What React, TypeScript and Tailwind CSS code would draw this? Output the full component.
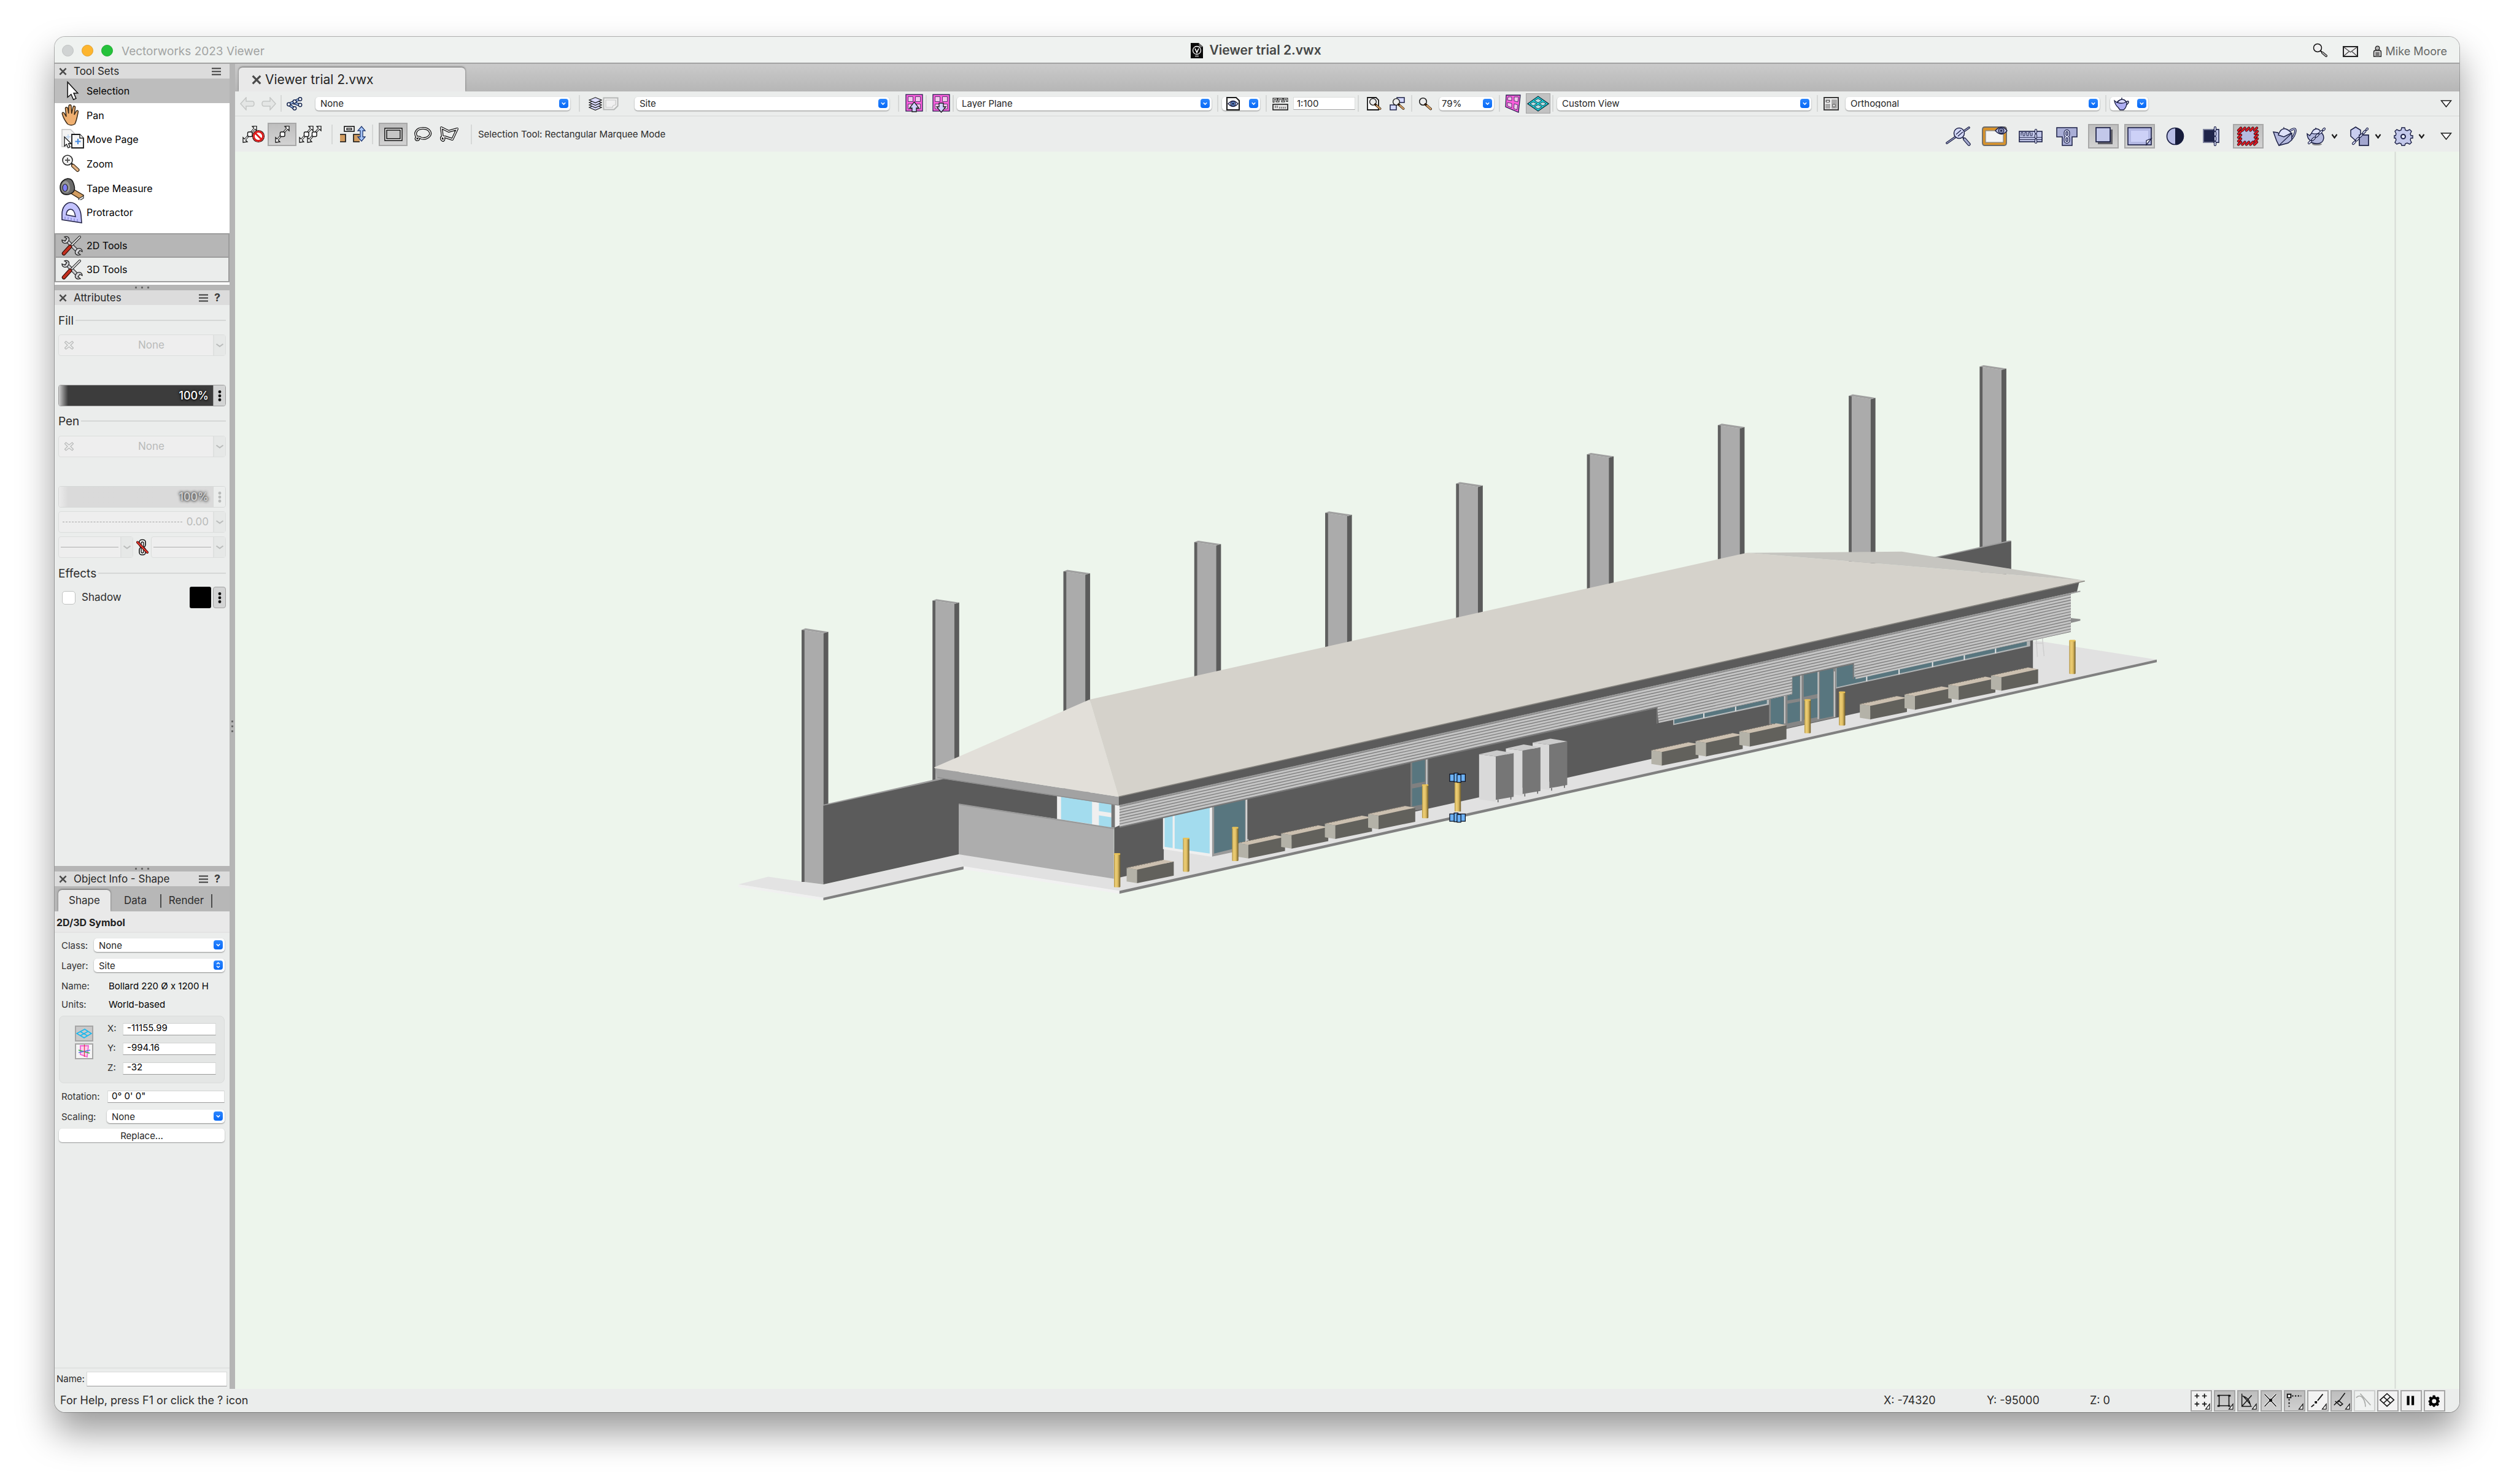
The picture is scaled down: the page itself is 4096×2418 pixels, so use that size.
import React from "react";
import type { ReactNode } from "react";

const NAVY = "#1b1f45";
const LAV = "#c3c8ea";

/* ---------- small building blocks ---------- */

function Ic({ w, h, className = "", children }: { w: number; h: number; className?: string; children: ReactNode }) {
  return (
    <svg width={w} height={h} viewBox={`0 0 ${w} ${h}`} fill="none" aria-hidden="true" className={`shrink-0 ${className}`}>
      {children}
    </svg>
  );
}

function Sep({ className = "" }: { className?: string }) {
  return <span className={`w-[2px] shrink-0 bg-[#d6d8d7] ${className}`} />;
}

function BlueArrow({ double = false }: { double?: boolean }) {
  return (
    <svg width="15" height="15" viewBox="0 0 15 15" fill="none" aria-hidden="true" className="shrink-0 rounded-[4px] bg-linear-to-b from-[#2a86ff] to-[#0568f6]">
      {double ? (
        <path d="M5 6 7.500 3.500 10 6M5 9 7.500 11.500 10 9" stroke="#fff" strokeWidth="1.500" />
      ) : (
        <path d="M4.800 6.300 7.500 9 10.200 6.300" stroke="#fff" strokeWidth="1.600" />
      )}
    </svg>
  );
}

function Pick({ label, value, className = "", double = false, pad = "pl-2" }: { label: string; value: string; className?: string; double?: boolean; pad?: string }) {
  return (
    <div className={`relative flex h-[22px] shrink-0 items-center ${className}`}>
      <select aria-label={label} defaultValue={value} className={`h-full w-full appearance-none rounded-[5px] bg-white text-[15px] leading-none text-[#262626] shadow-[0_1px_2px_rgba(0,0,0,0.4)] ${pad}`}>
        <option>{value}</option>
      </select>
      <span className="pointer-events-none absolute right-[3px] top-[3px]">
        <BlueArrow double={double} />
      </span>
    </div>
  );
}

function Chevron({ className = "" }: { className?: string }) {
  return (
    <Ic w={14} h={8} className={className}>
      <path d="M1.500 1.500 7 5.500l5.500-4" stroke="currentColor" strokeWidth="2" />
    </Ic>
  );
}

function SmallChevron() {
  return (
    <Ic w={11} h={8}>
      <path d="M1.500 1 5.500 6.500 9.500 1" stroke="#1c1c1c" strokeWidth="2.200" />
    </Ic>
  );
}

function CloseX({ size = 13 }: { size?: number }) {
  return (
    <svg width={size} height={size} viewBox="0 0 14 14" aria-hidden="true">
      <path d="M1.500 1.500 12.500 12.500M12.500 1.500 1.500 12.500" stroke="#4a4a4a" strokeWidth="2.800" />
    </svg>
  );
}

function MenuBars() {
  return (
    <svg width="15" height="13" viewBox="0 0 15 13" aria-hidden="true">
      <path d="M0 1.500h15M0 6.500h15M0 11.500h15" stroke="#3c3c3c" strokeWidth="2" />
    </svg>
  );
}

function Grip() {
  return (
    <div className="flex items-center justify-center gap-[7px] bg-[#b5b5b5]">
      <i className="size-[3px] bg-[#6a6a6a]" />
      <i className="size-[3px] bg-[#6a6a6a]" />
      <i className="size-[3px] bg-[#6a6a6a]" />
    </div>
  );
}

function PaletteHeader({ title, help = true }: { title: string; help?: boolean }) {
  return (
    <header className="flex h-6 shrink-0 items-center bg-[#dcdcdc] pl-[7px] pr-[14px] text-[17px] leading-6 text-[#262626]">
      <button aria-label={`Close ${title}`}><CloseX /></button>
      <h2 className="ml-[11px] grow">{title}</h2>
      <button aria-label={`${title} menu`}><MenuBars /></button>
      {help && <button aria-label={`${title} help`} className="ml-[9px] w-[12px] text-[18px] font-bold leading-6 text-[#3c3c3c]">?</button>}
    </header>
  );
}

/* ---------- title bar ---------- */

function TitleBar() {
  return (
    <header className="grid h-11 shrink-0 grid-cols-[1fr_auto_1fr] items-center border-b-2 border-[#a3a3a3] bg-[#eff2f0] pl-3 pr-5 pt-[2px]">
      <div className="flex items-center gap-[13px]">
        <button aria-label="Close window" className="size-[19px] rounded-full border border-[#bfc2c2] bg-[#d0d3d3]" />
        <button aria-label="Minimize window" className="size-[19px] rounded-full border border-[#e09f2b] bg-[#fdb52e]" />
        <button aria-label="Zoom window" className="size-[19px] rounded-full border border-[#1eaa30] bg-[#25c23b]" />
        <span className="ml-px pt-1 text-[19px] leading-6 text-[#a2a4a3]">Vectorworks 2023 Viewer</span>
      </div>
      <div className="flex items-center gap-[10px] pl-[5px]">
        <svg width="20" height="25" viewBox="0 0 20 25" aria-hidden="true">
          <path d="M0 0h13l7 6v19H0z" fill="#0a0a0a" />
          <path d="M13 0l7 6.500-6 1z" fill="#6a6a6a" />
          <circle cx="10" cy="12" r="6.500" stroke="#fff" strokeWidth="1.300" fill="none" />
          <path d="M7 9l3 6.500L13 9" stroke="#fff" strokeWidth="1.700" fill="none" />
          <path d="M7 21.500h6" stroke="#9a9a9a" strokeWidth="2" />
        </svg>
        <h1 className="text-[21px] font-semibold leading-6 text-[#454746]">Viewer trial 2.vwx</h1>
      </div>
      <div className="flex items-center justify-end">
        <button aria-label="Search">
          <Ic w={25} h={24}>
            <circle cx="8" cy="8" r="6.500" fill="#f0f0f0" stroke="#111" strokeWidth="1.500" />
            <path d="M12.500 12.500 16 16" stroke="#111" strokeWidth="2" />
            <path d="M16 16l6 5" stroke="#111" strokeWidth="4" strokeLinecap="round" />
            <path d="M16 16l6 5" stroke="#b5b5b5" strokeWidth="2" strokeLinecap="round" />
          </Ic>
        </button>
        <button aria-label="Messages" className="ml-6 mt-1">
          <Ic w={25} h={18}>
            <rect x="1" y="1" width="23" height="16" fill="#ededed" stroke="#222" strokeWidth="2" />
            <path d="M2 2l10.500 8L23 2M2 16l8-7M23 16l-8-7" stroke="#444" strokeWidth="1.300" />
          </Ic>
        </button>
        <button className="ml-6 flex items-center gap-[6px] pt-[3px] text-[18px] leading-6 text-[#656766]">
          <Ic w={15} h={19}>
            <circle cx="7.500" cy="4.500" r="3.300" fill="#b5b5b5" stroke="#222" strokeWidth="1.300" />
            <path d="M1.500 18V11q0-3 3-3h6q3 0 3 3v7z" fill="#c9c9c9" stroke="#222" strokeWidth="1.300" />
            <path d="M4.500 11h6v7h-6z" fill="#777" />
          </Ic>
          Mike Moore
        </button>
      </div>
    </header>
  );
}

/* ---------- tool palette ---------- */

const ToolArt: Record<string, ReactNode> = {
  Selection: (
    <path d="M17 4v26l6-5 4 9 4.500-2-4-9h7z" fill="#fff" stroke="#111" strokeWidth="1.600" transform="translate(-3 0) scale(.95)" />
  ),
  Pan: (
    <path d="M13 33C9 28 6 22 4.500 17c-1-3 2-4 3.500-1l3 5L9.500 8c0-3 3.500-3 4 0l1.200 8 .3-12c.3-3 4-3 4 0l.6 12L22 5.500c.6-2.500 4-2 3.500 1L24 18l3-5.500c1.300-2.500 4-1.500 3.300 1C29 20 28 27 25 33q-6 4-12 0z" fill="#f0b071" stroke="#3a2a18" strokeWidth="1.500" />
  ),
  "Move Page": (
    <>
      <path d="M4 3h14l6 6v22H4z" fill="#f3f3f3" stroke="#c4c4c4" strokeWidth="1.500" />
      <path d="M14 11v8M10 15h8" stroke="#b8d2ef" strokeWidth="1.500" />
      <path d="M20 11h13l6 6v16H20z" fill="#f5f5f5" stroke="#1a1a1a" strokeWidth="1.800" />
      <path d="M33 11v6h6" stroke="#1a1a1a" strokeWidth="1.300" fill="#fff" />
      <path d="M30 18v9M25.500 22.500h9" stroke="#3f86e0" strokeWidth="2" />
      <path d="M8 15v15l3.500-3 2.500 6 3-1.300-2.400-5.700H19z" fill="#fff" stroke="#111" strokeWidth="1.300" />
    </>
  ),
  Zoom: (
    <>
      <circle cx="13" cy="13" r="8" fill="#f3f3f3" stroke="#2a2a2a" strokeWidth="1.600" />
      <path d="M13 9v8M9 13h8" stroke="#555" strokeWidth="1.800" />
      <path d="M19 18l3 3" stroke="#222" strokeWidth="3" />
      <path d="M22 22l7.500 7" stroke="#2a1c0c" strokeWidth="6" strokeLinecap="round" />
      <path d="M22 22l7.500 7" stroke="#e2b283" strokeWidth="3.800" strokeLinecap="round" />
    </>
  ),
  "Tape Measure": (
    <>
      <path d="M15 25l7-5 17 10-2 5-4 1z" fill="#d19c60" stroke="#2a1c0c" strokeWidth="1.400" />
      <path d="M31 36l8-5v4l-7 4z" fill="#eee" stroke="#333" strokeWidth="1.200" />
      <path d="M1 17C1 9 7 4 13 3c7 0 9 4 11 12s-2 12-10 14C5 30 1 25 1 17z" fill="#6b6b6b" stroke="#161616" strokeWidth="1.500" />
      <path d="M3 18c0-7 3-11 7-11s7 6 7 11-3 8-7 8-7-3-7-8z" fill="#999" />
      <ellipse cx="9" cy="18" rx="4" ry="6" fill="#7f7ff5" stroke="#222" strokeWidth="1.200" />
    </>
  ),
  Protractor: (
    <>
      <path fillRule="evenodd" d="M4 31V22C4 10 11 3 18 3c9 0 16 10 17 20l1 13zM11 23l15 3c-1-7-4-12-8-12-5 0-7 5-7 9z" fill="#c3c3ff" stroke="#26264a" strokeWidth="1.600" />
      <path d="M9 30v-4M14 31v-4M19 32v-4M24 33v-4M29 34v-4" stroke="#7d7dd0" strokeWidth="1.200" />
    </>
  ),
};

function CrossedTools() {
  return (
    <Ic w={40} h={38}>
      <path d="M10 9l19 19" stroke="#2a2a2a" strokeWidth="6" />
      <path d="M10 9l19 19" stroke="#cfd0d4" strokeWidth="3.600" />
      <path d="M4 10c0 5 5 7 9 4l2-3C17 6 12 3 8 5l4 3-3 4z" fill="#d6d6da" stroke="#222" strokeWidth="1.300" />
      <path d="M37 29c0-5-5-7-9-4l-2 3c-2 5 3 8 8 6l-4-3 3-4z" fill="#d6d6da" stroke="#222" strokeWidth="1.300" />
      <path d="M33 5 20 18" stroke="#222" strokeWidth="4" strokeLinecap="round" />
      <path d="M33 5 20 18" stroke="#efefef" strokeWidth="1.800" strokeLinecap="round" />
      <path d="M17 21 7 32" stroke="#2b0a06" strokeWidth="6.500" strokeLinecap="round" />
      <path d="M17 21 7 32" stroke="#c3301f" strokeWidth="4.300" strokeLinecap="round" />
    </Ic>
  );
}

function ToolSets() {
  return (
    <section aria-label="Tool Sets" className="flex shrink-0 flex-col bg-white text-[16px] text-black">
      <PaletteHeader title="Tool Sets" help={false} />
      <button className="flex h-10 items-center gap-1 bg-[#bdbdbd] pl-2">
        <Ic w={40} h={36}>{ToolArt.Selection}</Ic>Selection
      </button>
      <div className="mb-[14px] grid h-[198px] grid-rows-5">
        {["Pan", "Move Page", "Zoom", "Tape Measure", "Protractor"].map((t) => (
          <button key={t} className="flex items-center gap-1 pl-2">
            <Ic w={40} h={38}>{ToolArt[t]}</Ic>{t}
          </button>
        ))}
      </div>
      <button className="flex h-10 items-center gap-1 border-2 border-[#9c9c9c] bg-[#b6b6b6] pl-[6px]">
        <CrossedTools />2D Tools
      </button>
      <button className="mb-1 flex h-10 items-center gap-1 border-2 border-t-0 border-[#9c9c9c] bg-[#ebedec] pl-[6px]">
        <CrossedTools />3D Tools
      </button>
    </section>
  );
}

/* ---------- attributes palette ---------- */

function GroupTitle({ children, className = "" }: { children: ReactNode; className?: string }) {
  return (
    <h3 className={`flex h-6 items-center gap-[3px] text-[19px] leading-6 text-[#2b2b2b] ${className}`}>
      <span className="pt-[2px]">{children}</span>
      <span className="h-[2px] grow bg-[#d5d7d6]" />
    </h3>
  );
}

function FadedDrop({ label, children, className = "" }: { label: string; children: ReactNode; className?: string }) {
  return (
    <button disabled aria-label={label} className={`flex h-[35px] items-stretch rounded-[4px] border border-[#dcdedd] bg-[#eeeeee] text-[17px] text-[#b9bbba] ${className}`}>
      <span className="relative flex grow items-center">{children}</span>
      <span className="flex w-5 items-center justify-center border-l-2 border-[#dfe1e0] bg-[#e6e8e7]"><Chevron /></span>
    </button>
  );
}

function NoneFill() {
  return (
    <>
      <Ic w={15} h={15} className="ml-[9px]">
        <path d="M2.500 1 7.500 5l5-4 2 2-4.500 4.500 4.500 4.500-2 2-5-4-5 4-2-2L5 7.500.500 3z" stroke="#b9bbba" strokeWidth="1.300" />
      </Ic>
      <span className="ml-[105px]">None</span>
    </>
  );
}

function Dots({ faded = false }: { faded?: boolean }) {
  return (
    <Ic w={6} h={20}>
      <g fill={faded ? "#b9bbba" : "#111"}>
        <circle cx="3" cy="3.500" r="2.400" /><circle cx="3" cy="10" r="2.400" /><circle cx="3" cy="16.500" r="2.400" />
      </g>
    </Ic>
  );
}

function Opacity({ faded = false, className = "" }: { faded?: boolean; className?: string }) {
  return (
    <div className={`flex h-[35px] overflow-hidden rounded-[4px] border ${faded ? "border-[#d6d8d7]" : "border-[#9b9b9b]"} ${className}`}>
      <div className={`flex grow items-center justify-end pr-[7px] text-[18px] font-medium ${faded ? "bg-linear-to-r from-[#ebebeb] from-0% to-[#dadada] to-6% text-[#d2d2d2] [text-shadow:0_0_4px_#333,0_0_5px_#444]" : "bg-linear-to-r from-[#d0d0d0] from-0% to-[#3c3c3c] to-6% text-white [text-shadow:0_0_5px_#000,0_1px_3px_#000]"}`}>
        100%
      </div>
      <button aria-label="Opacity options" className={`flex w-5 items-center justify-center border-l ${faded ? "border-[#d6d8d7] bg-[#ebedec]" : "border-[#9b9b9b] bg-[#d3d4d4]"}`}>
        <Dots faded={faded} />
      </button>
    </div>
  );
}

function Attributes() {
  return (
    <section aria-label="Attributes" className="flex min-h-0 grow flex-col">
      <PaletteHeader title="Attributes" />
      <div className="flex flex-col px-[6px] pt-[13px]">
        <GroupTitle>Fill</GroupTitle>
        <FadedDrop label="Fill style" className="mt-[11px]"><NoneFill /></FadedDrop>
        <Opacity className="mt-[47px]" />
        <GroupTitle className="mt-3">Pen</GroupTitle>
        <FadedDrop label="Pen style" className="mt-3"><NoneFill /></FadedDrop>
        <Opacity faded className="mt-[47px]" />
        <FadedDrop label="Line thickness" className="mt-[6px]">
          <span className="ml-[6px] mr-[7px] grow border-t border-dashed border-[#a5a5a5]" />
          <span className="mr-[7px]">0.00</span>
        </FadedDrop>
        <div className="mt-[6px] flex items-center justify-between">
          <FadedDrop label="Start marker" className="w-[122px]"><span className="mx-[3px] h-px grow bg-[#adadad]" /></FadedDrop>
          <button aria-label="Link markers">
            <Ic w={20} h={28}>
              <rect x="5" y="1.500" width="10" height="12" rx="4" fill="#fff" stroke="#111" strokeWidth="1.600" />
              <rect x="5" y="14" width="10" height="12" rx="4" fill="#fff" stroke="#111" strokeWidth="1.600" />
              <rect x="8" y="5" width="4" height="18" rx="2" fill="#ddd" stroke="#111" strokeWidth="1.300" />
              <path d="M2 5.500 18 22" stroke="#3a0a08" strokeWidth="4" strokeLinecap="round" />
              <path d="M2 5.500 18 22" stroke="#e8352c" strokeWidth="2.500" strokeLinecap="round" />
            </Ic>
          </button>
          <FadedDrop label="End marker" className="w-[122px]"><span className="mx-[3px] h-px grow bg-[#adadad]" /></FadedDrop>
        </div>
        <GroupTitle className="mt-[13px]">Effects</GroupTitle>
        <div className="mt-[10px] flex h-[35px] items-center">
          <label className="flex grow items-center gap-[10px] pl-[6px] text-[17px] text-[#2b2b2b]">
            <input type="checkbox" className="size-[22px] appearance-none rounded-[5px] border border-[#c0c2c1] bg-white" />
            Shadow
          </label>
          <button aria-label="Shadow colour" className="size-[35px] rounded-[3px] bg-black" />
          <button aria-label="Shadow options" className="ml-[3px] flex h-[35px] w-[21px] items-center justify-center rounded-[4px] border border-[#a3a3a3] bg-[#d3d4d4]"><Dots /></button>
        </div>
      </div>
    </section>
  );
}

/* ---------- object info palette ---------- */

const fieldBox = "h-5 border border-t-[#d0d2d1] border-x-[#dcdedd] border-b-[#9b9b9b] bg-white pl-[6px] text-[15px] leading-none text-black";

function PlaneIcon() {
  return (
    <Ic w={26} h={22}>
      <path d="M1 11 14 4l11 7-12 7zM7 8l12 7M19.500 7.500 7 14.500" stroke="#19b8ee" strokeWidth="1.600" />
    </Ic>
  );
}

function AxisIcon() {
  return (
    <Ic w={26} h={22}>
      <path d="M7 2h13l-2 18-11-4z" fill="#fbd0ee" stroke="#f062d2" strokeWidth="1.800" />
      <path d="M4 9l18 5" stroke="#29b94a" strokeWidth="1.300" />
      <path d="M4 13l19-4" stroke="#5a78ea" strokeWidth="1.300" />
      <path d="M13.500 0v20" stroke="#e23a4c" strokeWidth="1.300" />
    </Ic>
  );
}

function ObjectInfo() {
  const label = "text-[15px] leading-none text-[#333]";
  return (
    <section aria-label="Object Info" className="flex h-[843px] shrink-0 flex-col">
      <PaletteHeader title="Object Info - Shape" />
      <div role="tablist" className="flex h-[41px] shrink-0 items-end bg-[#b7b7b7] pl-[6px] text-[17px] text-[#2b2b2b]">
        <button role="tab" aria-selected="true" className="h-[35px] w-[85px] rounded-t-[6px] bg-[#e9e9e9] shadow-[0_-1px_3px_rgba(0,0,0,0.45)]">Shape</button>
        <button role="tab" aria-selected="false" className="h-[35px] w-[81px]">Data</button>
        <i className="mb-[6px] h-[22px] w-[2px] bg-[#4c4c4c]" />
        <button role="tab" aria-selected="false" className="h-[35px] w-[81px]">Render</button>
        <i className="mb-[6px] h-[22px] w-[2px] bg-[#4c4c4c]" />
      </div>
      <h3 className="z-10 h-[35px] shrink-0 border-b-2 border-[#e3e3e3] bg-[#e9e9e9] pl-[3px] text-[16px] font-bold leading-[36px] text-[#222]">2D/3D Symbol</h3>
      <div className="flex grow flex-col px-[7px] pr-[8px] pt-[9px]">
        <div className="flex h-[22px] items-center justify-between pl-1">
          <span className={label}>Class:</span>
          <Pick label="Class" value="None" className="w-[213px]" />
        </div>
        <div className="mt-[11px] flex h-[22px] items-center justify-between pl-1">
          <span className={label}>Layer:</span>
          <Pick label="Layer" value="Site" double className="w-[213px]" />
        </div>
        <div className="mt-[11px] flex h-[22px] items-center pl-1">
          <span className={`w-[77px] ${label}`}>Name:</span>
          <span className="text-[15px] leading-none text-black">Bollard 220 Ø x 1200 H</span>
        </div>
        <div className="mt-2 flex h-[22px] items-center pl-1">
          <span className={`w-[77px] ${label}`}>Units:</span>
          <span className="text-[15px] leading-none text-black">World-based</span>
        </div>
        <div className="mt-2 flex h-[110px] rounded-[8px] border border-[#dadcdb] bg-[#e4e6e5] pl-[25px] pt-[11px]">
          <div className="flex flex-col gap-[3px] pt-1">
            <button aria-label="Layer plane mode" className="flex h-[26px] w-[30px] items-center justify-center border-2 border-[#a6a6a6] bg-[#c9c9c9]"><PlaneIcon /></button>
            <button aria-label="Screen plane mode" className="flex h-[26px] w-[30px] items-center justify-center border-2 border-[#a6a6a6] bg-[#f5f5f5]"><AxisIcon /></button>
          </div>
          <div className="ml-[23px] flex flex-col gap-3">
            {[["X:", "-11155.99"], ["Y:", "-994.16"], ["Z:", "-32"]].map(([k, v]) => (
              <label key={k} className={`flex h-5 items-center ${label}`}>
                <span className="w-[25px] pb-1">{k}</span>
                <input defaultValue={v} className={`w-[152px] pb-[5px] ${fieldBox}`} />
              </label>
            ))}
          </div>
        </div>
        <label className={`mt-[11px] flex h-[21px] items-center pl-1 ${label}`}>
          <span className="w-[75px] shrink-0">Rotation:</span>
          <input defaultValue={"0° 0' 0\""} className={`w-0 min-w-0 grow pb-[3px] ${fieldBox}`} />
        </label>
        <div className="mt-[11px] flex h-[22px] items-center justify-between pl-1">
          <span className={label}>Scaling:</span>
          <Pick label="Scaling" value="None" className="w-[192px]" />
        </div>
        <button className="mt-[9px] h-[22px] rounded-[5px] bg-white text-[15px] leading-none text-[#262626] shadow-[0_1px_2px_rgba(0,0,0,0.35)]">Replace...</button>
      </div>
      <label className="flex h-[35px] shrink-0 items-center border-t-2 border-[#e1e3e2] pl-[3px] pr-1 text-[15px] text-[#2b2b2b]">
        <span className="w-[49px] shrink-0 pt-[2px]">Name:</span>
        <input defaultValue="" className="h-6 w-0 min-w-0 grow border border-[#d8dad9] border-b-[#9b9b9b] bg-white" />
      </label>
    </section>
  );
}

/* ---------- view bar ---------- */

function PinkPlane({ dir }: { dir: "up" | "down" }) {
  return (
    <Ic w={29} h={31}>
      <rect x="1" y="1" width="27" height="27" fill="#fb5fdc" stroke="#2a2050" strokeWidth="1.300" />
      <path d="M4.500 4.500h8v8h-8zM16.500 4.500h8v8h-8zM4.500 16.500h8v8h-8zM16.500 16.500h8v8h-8z" fill="#f3c6ec" stroke="#2a2050" strokeWidth=".8" />
      {dir === "up" ? (
        <path d="M14.500 13 22 23h-4v6h-7v-6H7z" fill="#cfd0ff" stroke="#1a1a1a" strokeWidth="1.300" />
      ) : (
        <path d="M14.500 30 22 21h-4v-6h-7v6H7z" fill="#cfd0ff" stroke="#1a1a1a" strokeWidth="1.300" />
      )}
    </Ic>
  );
}

function Magnifier() {
  return (
    <>
      <circle cx="7.500" cy="7.500" r="5.800" fill="#ececec" stroke="#1a1a1a" strokeWidth="1.500" />
      <path d="M11.500 12 20 19.500" stroke="#2a1808" strokeWidth="4" strokeLinecap="round" />
      <path d="M14 14 20 19.500" stroke="#dba56c" strokeWidth="2.400" strokeLinecap="round" />
    </>
  );
}

function ViewBar() {
  return (
    <div className="flex h-[41px] shrink-0 items-center border-b-2 border-[#e0e2e1] pl-2 pr-3">
      <button aria-label="Previous view">
        <Ic w={24} h={22}><path d="M1 11 10 1v6h10q3 0 3 4t-3 4H10v6z" fill="#e4e6e5" stroke="#c4c6c5" strokeWidth="1.500" /></Ic>
      </button>
      <button aria-label="Next view" className="ml-[11px]">
        <Ic w={24} h={22}><path d="M23 11 14 1v6H4q-3 0-3 4t3 4h10v6z" fill="#e4e6e5" stroke="#c4c6c5" strokeWidth="1.500" /></Ic>
      </button>
      <Sep className="ml-[7px] h-[27px]" />
      <button aria-label="Classes" className="ml-2">
        <Ic w={26} h={22}>
          <path d="M3 12 22 3M3 12 13 19M9 9l13 4" stroke="#16264f" strokeWidth="4.500" />
          <path d="M3 12 22 3M3 12 13 19M9 9l13 4" stroke="#a9c8f5" strokeWidth="2" />
          <g fill="#fff" stroke="#16264f" strokeWidth="1.500">
            <circle cx="3.500" cy="12" r="2.700" /><circle cx="13" cy="7.500" r="2.700" /><circle cx="22" cy="3.500" r="2.700" /><circle cx="22" cy="13" r="2.700" /><circle cx="13" cy="18.500" r="2.700" />
          </g>
        </Ic>
      </button>
      <Pick label="Active class" value="None" className="ml-[21px] w-[415px]" />
      <Sep className="ml-[14px] h-[27px]" />
      <button aria-label="Layers" className="ml-[14px]">
        <Ic w={22} h={22}>
          <g fill="#dcdcff" stroke="#1a1a1a" strokeWidth="1.200">
            <path d="M1 17l10-4 10 4-10 4.500z" /><path d="M1 13l10-4 10 4-10 4.500z" /><path d="M1 9l10-4 10 4-10 4.500z" /><path d="M1 5 11 .800 21 5 11 9.500z" />
          </g>
        </Ic>
      </button>
      <Ic w={26} h={22} className="ml-px">
        <path d="M1.500 1.500h23v13l-6 6h-17z" fill="#f0f0f0" stroke="#b5b7b6" strokeWidth="2" />
        <path d="M5 5h16v8q-5 0-5 4H5z" stroke="#c6c8c7" strokeWidth="1.200" />
      </Ic>
      <Pick label="Active layer" value="Site" className="ml-[26px] w-[415px]" />
      <Sep className="ml-[14px] h-[27px]" />
      <button aria-label="Plane up" className="ml-[10px]"><PinkPlane dir="up" /></button>
      <Sep className="ml-1 h-[27px]" />
      <button aria-label="Plane down" className="ml-[9px]"><PinkPlane dir="down" /></button>
      <Sep className="ml-1 h-[27px]" />
      <Pick label="Active plane" value="Layer Plane" className="ml-[5px] w-[415px]" />
      <Sep className="ml-[9px] h-[27px]" />
      <button aria-label="Saved views" className="ml-[6px] flex h-[22px] w-[62px] items-center justify-between rounded-[5px] bg-white pl-[7px] pr-[3px] shadow-[0_1px_2px_rgba(0,0,0,0.4)]">
        <Ic w={22} h={22}>
          <path d="M1 1h15l5 5v15H1z" fill="#fff" stroke="#1a1a1a" strokeWidth="2" />
          <path d="M3 11q8-9 16 0-8 9-16 0z" fill="#e8eefc" stroke={NAVY} strokeWidth="1.300" />
          <circle cx="11" cy="11" r="4" fill="#5b7fc0" stroke={NAVY} strokeWidth="1.200" />
          <circle cx="11" cy="11" r="1.500" fill="#101530" />
        </Ic>
        <BlueArrow />
      </button>
      <Sep className="ml-[9px] h-[27px]" />
      <label className="ml-[9px] flex items-center">
        <Ic w={26} h={22}>
          <path d="M2 9V3h5v4h3V3h6v4h3V3h5v5" stroke="#1a1a1a" strokeWidth="3" />
          <path d="M2 8V3h5v4h3V3h6v4h3V3h5v4" stroke="#fff" strokeWidth="1" />
          <rect x="1" y="12" width="24" height="9" fill="#e3e3e3" stroke="#1a1a1a" strokeWidth="1.600" />
          <path d="M5 14v4M8 14v4M12 19v-3M15 19v-3M18 19v-3M21 19v-3" stroke="#555" strokeWidth="1.200" />
        </Ic>
        <input aria-label="Layer scale" defaultValue="1:100" className="ml-2 h-[21px] w-[101px] border border-[#dcdedd] border-b-[#a5a5a5] bg-white pl-[5px] text-[15px] leading-none text-[#262626]" />
      </label>
      <Sep className="ml-1 h-[27px]" />
      <button aria-label="Fit to page" className="ml-[13px]">
        <Ic w={24} h={22}>
          <path d="M1 1h14l4 4v16H1z" fill="#fff" stroke="#1a1a1a" strokeWidth="1.800" />
          <g transform="translate(3 1) scale(.93)"><Magnifier /></g>
        </Ic>
      </button>
      <button aria-label="Fit to objects" className="ml-[13px]">
        <Ic w={25} h={22}>
          <path d="M12 1h12v8H12zM1 13h10v8H1z" fill="#d4d8ff" stroke={NAVY} strokeWidth="1.500" />
          <g transform="translate(4 1) scale(.93)"><Magnifier /></g>
        </Ic>
      </button>
      <Sep className="ml-[10px] h-[27px]" />
      <Ic w={22} h={22} className="ml-[10px]"><Magnifier /></Ic>
      <Pick label="Zoom" value="79%" className="ml-3 w-[89px]" pad="pl-1" />
      <Sep className="ml-2 h-[27px]" />
      <button aria-label="Look at working plane" className="ml-2">
        <Ic w={26} h={30}>
          <path d="M2 1h23l-3 28L1 20z" fill="#fb5fdc" stroke="#2a2050" strokeWidth="1.300" />
          <path d="M5 4h6v6l-7-1zM15 4h7l-1 8-6-1.500zM4 13l7 1.500v7l-7-3zM15 15l6 2-1.500 8-5-2z" fill="#f3c6ec" stroke="#2a2050" strokeWidth=".8" />
        </Ic>
      </button>
      <button aria-label="Planar mode" aria-pressed="true" className="ml-2 flex h-[33px] w-10 items-center justify-center border border-[#a3a3a3] bg-[#c2c2c2]">
        <Ic w={36} h={26}>
          <path d="M1 13 18 1l17 12-17 12z" fill="#1fe0e8" stroke="#0b3340" strokeWidth="1.400" />
          <path d="M18 4.500l6 3.500-6 3.500L12 8zM26 10l5 3-5 3.500-6-3.500zM10 10l6 3-6 3.500L5 13zM18 14.500l6 3.500-6 3.500-6-3.500z" fill="#b9dfe3" stroke="#0b3340" strokeWidth="1" />
        </Ic>
      </button>
      <Sep className="ml-[3px] h-[27px]" />
      <Pick label="Standard view" value="Custom View" className="ml-[6px] w-[414px]" />
      <Sep className="ml-[9px] h-[27px]" />
      <button aria-label="View panes" className="ml-[9px]">
        <Ic w={25} h={22}>
          <rect x="1" y="1" width="23" height="20" fill="#f4f4f4" stroke="#3a3a3a" strokeWidth="2" />
          <path d="M3 4h8v5H3zM13 4h9v15h-9zM3 11h8v8H3z" fill="#a9a9a9" />
          <path d="M4.500 5.500h5v3h-5zM15 12h4v4h-4z" fill="#eee" stroke="#555" strokeWidth="1" />
        </Ic>
      </button>
      <Pick label="Projection" value="Orthogonal" className="ml-[11px] w-[414px]" />
      <Sep className="ml-[9px] h-[27px]" />
      <button aria-label="Render mode" className="ml-[6px] flex h-[22px] w-[62px] items-center justify-between rounded-[5px] bg-white pl-[6px] pr-[3px] shadow-[0_1px_2px_rgba(0,0,0,0.4)]">
        <Ic w={25} h={22}>
          <path d="M19 9q5-4 5-1t-5 6" stroke={NAVY} strokeWidth="1.500" />
          <path d="M5 9 1 6q1 7 6 11l3 4h6q5-4 5-12-2-4-8-4T5 9z" fill="#aeaef2" stroke={NAVY} strokeWidth="1.400" />
          <path d="M6 9q3-5 7.500-5T20 8q-6 4-14 1zM13 4V1" fill="#dcdcff" stroke={NAVY} strokeWidth="1.400" />
        </Ic>
        <BlueArrow />
      </button>
      <button aria-label="View bar menu" className="ml-auto">
        <Ic w={19} h={12}><path d="M1.500 1h16l-8 10z" fill="#fff" stroke="#1a1a1a" strokeWidth="1.500" /></Ic>
      </button>
    </div>
  );
}

/* ---------- mode bar ---------- */

function Handle({ x = 0 }: { x?: number }) {
  return (
    <g transform={`translate(${x} 0)`}>
      <path d="M3 24 21 3" stroke="#111" strokeWidth="3.400" />
      <path d="M1 27v-8l7 7zM23 0v8l-7-7z" fill="#fff" stroke="#111" strokeWidth="1.300" />
      <path d="M3 24 21 3" stroke="#fff" strokeWidth="1.300" />
      <rect x="8.500" y="10" width="7.500" height="7.500" rx="2" fill="#fff" stroke="#111" strokeWidth="1.400" />
    </g>
  );
}

function Chain({ d }: { d: string }) {
  return (
    <>
      <path d={d} stroke={NAVY} strokeWidth="4.200" strokeLinecap="round" strokeDasharray="4 4" />
      <path d={d} stroke={NAVY} strokeWidth="1.600" />
      <path d={d} stroke="#dfe3fb" strokeWidth="1.900" strokeLinecap="round" strokeDasharray="4 4" />
    </>
  );
}

const hatch = [
  ...[5, 11.500, 18, 24.500, 31].flatMap((x) => [`M${x} 6.500l4-4`, `M${x} 29.500l4-4`]),
  ...[12, 18, 24].flatMap((y) => [`M5 ${y}l4-4`, `M32 ${y}l4-4`]),
].join("");

const modeButtons: { name: string; on?: boolean; art: ReactNode }[] = [
  {
    name: "Object data visualization",
    art: (
      <Ic w={42} h={32}>
        <path d="M2 27 38 2" stroke={NAVY} strokeWidth="3.600" strokeLinecap="round" />
        <path d="M2 27 38 2" stroke="#a7acd0" strokeWidth="1.400" strokeLinecap="round" />
        <circle cx="22" cy="11" r="8.500" fill="#d3d8f6" stroke={NAVY} strokeWidth="1.500" />
        <path d="M17 13l8-7M20 16l8-7" stroke={NAVY} strokeWidth="1.300" />
        <path d="M28 18l3 3" stroke={NAVY} strokeWidth="2.500" />
        <path d="M31 21l7 8" stroke={NAVY} strokeWidth="5.500" strokeLinecap="round" />
        <path d="M31 21l7 8" stroke="#a7acd0" strokeWidth="3.200" strokeLinecap="round" />
      </Ic>
    ),
  },
  {
    name: "Visibility",
    art: (
      <Ic w={42} h={32}>
        <path d="M5 1h31q4 0 4 4v22q0 4-4 4H5q-4 0-4-4V5q0-4 4-4z" fill="#d8922a" stroke="#6a6a6a" strokeWidth="1.800" />
        <rect x="6" y="7" width="29" height="19" fill="#f4f4f4" stroke="#8a8a8a" strokeWidth="1.300" />
        <path d="M22 7q10-12 19 0-9 11-19 0z" fill="#c9cdee" stroke={NAVY} strokeWidth="1.400" />
        <circle cx="31.500" cy="7" r="4.500" fill="#8288ae" stroke={NAVY} strokeWidth="1.300" />
        <circle cx="31.500" cy="7" r="1.500" fill={NAVY} />
      </Ic>
    ),
  },
  {
    name: "Show rulers",
    art: (
      <Ic w={42} h={32}>
        <rect x="2" y="8" width="37" height="17" fill={LAV} stroke={NAVY} strokeWidth="1.600" />
        <path d="M2 18h37M2 21.500h37" stroke={NAVY} strokeWidth="1.200" />
        <path d="M5 15v-5h3v5h3v-5h3v5h3v-5h3v5h3v-5" stroke={NAVY} strokeWidth="1" />
        <Chain d="M29 6v21" />
      </Ic>
    ),
  },
  {
    name: "Link text",
    art: (
      <Ic w={42} h={32}>
        <path d="M4 2h33v15h-8v14H13V17H4z" fill="#a9aed6" stroke={NAVY} strokeWidth="1.500" />
        <rect x="17.500" y="7" width="6" height="9" rx="3" stroke={NAVY} strokeWidth="4" />
        <rect x="17.500" y="17" width="6" height="9" rx="3" stroke={NAVY} strokeWidth="4" />
        <rect x="17.500" y="7" width="6" height="9" rx="3" stroke="#dfe3fb" strokeWidth="1.600" />
        <rect x="17.500" y="17" width="6" height="9" rx="3" stroke="#dfe3fb" strokeWidth="1.600" />
      </Ic>
    ),
  },
  {
    name: "Drop shadow",
    on: true,
    art: (
      <Ic w={42} h={32}>
        <rect x="12" y="5" width="24" height="24" fill="#5e5e66" />
        <rect x="9" y="2" width="23" height="23" fill={LAV} stroke={NAVY} strokeWidth="1.700" />
      </Ic>
    ),
  },
  {
    name: "Page view",
    on: true,
    art: (
      <Ic w={42} h={32}>
        <rect x="2" y="2" width="38" height="28" fill="#b4b9e4" stroke={NAVY} strokeWidth="1.600" />
        <rect x="7" y="7" width="28" height="18" fill="#cdd1f7" />
        <path d="M32 30v-7l8-3z" fill="#fff" stroke={NAVY} strokeWidth="1.300" />
      </Ic>
    ),
  },
  {
    name: "Black and white",
    art: (
      <Ic w={42} h={32}>
        <circle cx="20" cy="16" r="13.500" fill="#b9bee6" stroke={NAVY} strokeWidth="1.700" />
        <path d="M20 2.500a13.500 13.500 0 0 1 0 27z" fill="#171c3b" />
      </Ic>
    ),
  },
  {
    name: "Black background",
    art: (
      <Ic w={42} h={32}>
        <rect x="7" y="5" width="25" height="21" fill="#20254a" stroke="#7a7f9c" strokeWidth="1.800" />
        <path d="M24 5h8v21h-8z" fill={LAV} stroke={NAVY} strokeWidth="1.300" />
        <Chain d="M26 2v28" />
      </Ic>
    ),
  },
  {
    name: "Edit group",
    on: true,
    art: (
      <Ic w={42} h={32}>
        <path d="M7 5h28v22H7z" fill="#b6bbe0" />
        <path d={hatch} stroke="#2a0810" strokeWidth="4.200" strokeLinecap="round" />
        <path d={hatch} stroke="#dc1822" strokeWidth="2.900" strokeLinecap="round" />
      </Ic>
    ),
  },
  {
    name: "Solid render",
    art: (
      <Ic w={42} h={32}>
        <path d="M30 7q9-6 9 0-1 8-8 15" stroke={NAVY} strokeWidth="3.600" />
        <path d="M30 7q9-6 9 0-1 8-8 15" stroke="#c6cbee" strokeWidth="1.300" />
        <path d="M3 9l7 1 4 4 19-3v11l-6 5-15 4-4-8z" fill="#b4b9de" stroke={NAVY} strokeWidth="1.500" />
        <path d="M11 14Q15 2 23 4q6 2 9 7l-12 6z" fill="#dde0f8" stroke={NAVY} strokeWidth="1.400" />
        <path d="M20 4V1M32 12 13 30" stroke={NAVY} strokeWidth="1.200" />
      </Ic>
    ),
  },
];

const menuButtons: { name: string; art: ReactNode }[] = [
  {
    name: "Render options",
    art: (
      <Ic w={32} h={32}>
        <ellipse cx="17" cy="29" rx="8" ry="2" fill="#8d8d8d" />
        <path d="M5 15 1 12q0 7 5 11 1 5 11 5t11-9q0-8-8-11T5 15z" fill="#b4b9de" stroke={NAVY} strokeWidth="1.500" />
        <path d="M8 11q3-7 8-7t7 5q-7 5-15 2zM15 4V2" fill="#dde0f8" stroke={NAVY} strokeWidth="1.300" />
        <Chain d="M4 27 29 4" />
      </Ic>
    ),
  },
  {
    name: "Linked sheet",
    art: (
      <Ic w={32} h={32}>
        <path d="M9 1l8 5v10l-8 7-8-7V6z" fill="#c8cdef" stroke={NAVY} strokeWidth="1.500" />
        <rect x="15" y="14" width="15" height="17" fill="#a3a7cf" stroke={NAVY} strokeWidth="1.700" />
        <Chain d="M5 28 28 4" />
      </Ic>
    ),
  },
  {
    name: "Preferences",
    art: (
      <Ic w={32} h={32}>
        <path d="M13 2h5l1 4 3 1 4-2 3 3-2 4 1 3h3v4h-3l-1 3 2 4-3 3-4-2-3 1-1 3h-5l-1-3-3-1-4 2-3-3 2-4-1-3H1v-4h2l1-3-2-4 3-3 4 2 3-1z" fill={LAV} stroke={NAVY} strokeWidth="1.400" />
        <circle cx="15.500" cy="16.500" r="3.500" fill="#eceffd" stroke={NAVY} strokeWidth="2" />
      </Ic>
    ),
  },
];

function ModeBar() {
  const on = "flex h-[38px] w-[47px] items-center justify-center border-2 border-[#a8a8a8] bg-linear-to-b from-[#bfbfbf] to-[#d2d2d2]";
  return (
    <div className="flex h-[57px] shrink-0 items-center pl-3 pr-3">
      <button aria-label="Disable interactive scaling">
        <Ic w={37} h={28}>
          <Handle />
          <circle cx="26" cy="17" r="9.500" fill="#fff" stroke="#3a0a08" strokeWidth="1.200" />
          <circle cx="26" cy="17" r="7.500" stroke="#e01818" strokeWidth="2.800" />
          <path d="M21 12l10 10" stroke="#e01818" strokeWidth="2.800" />
        </Ic>
      </button>
      <button aria-label="Single object interactive scaling" aria-pressed="true" className={`ml-1 ${on}`}><Ic w={24} h={28}><Handle /></Ic></button>
      <button aria-label="Unrestricted interactive scaling" className="ml-1"><Ic w={38} h={28}><Handle /><Handle x={13} /></Ic></button>
      <Sep className="ml-[15px] h-8" />
      <button aria-label="Wall insertion" className="ml-3">
        <Ic w={42} h={28}>
          <rect x="7" y="1" width="16" height="8" fill="#fff" stroke="#111" strokeWidth="1.600" />
          <rect x="11" y="4" width="8" height="2.500" stroke="#111" strokeWidth="1.300" />
          <path d="M0 14h9v12H0z" fill="#d19c60" /><path d="M0 14h9v12H0" stroke="#111" strokeWidth="1.600" />
          <path d="M32 14H22v12h10" fill="#d19c60" stroke="#111" strokeWidth="1.600" />
          <path d="M35 1l6 7h-4v10h4l-6 7-6-7h4V8h-4z" fill="#a9c8fb" stroke="#223a72" strokeWidth="1.300" />
        </Ic>
      </button>
      <Sep className="ml-[10px] h-8" />
      <button aria-label="Rectangular marquee" aria-pressed="true" className={`ml-[9px] ${on}`}>
        <Ic w={30} h={22}>
          <rect x="1" y="1" width="28" height="20" fill="#fff" stroke="#1a1a1a" strokeWidth="1.600" />
          <rect x="4" y="4" width="22" height="14" fill="#c6c6c6" stroke="#1a1a1a" strokeWidth="1.600" />
        </Ic>
      </button>
      <button aria-label="Lasso marquee" className="ml-[10px]">
        <Ic w={30} h={26}>
          <path d="M6 18C0 12 4 3 15 3s14 8 11 12-9 6-14 4q-4-3-7-1t0 4q4 0 3-3" stroke="#111" strokeWidth="4" strokeLinejoin="round" />
          <path d="M6 18C0 12 4 3 15 3s14 8 11 12-9 6-14 4q-4-3-7-1t0 4q4 0 3-3" stroke="#fff" strokeWidth="1.500" />
        </Ic>
      </button>
      <button aria-label="Polygonal marquee" className="ml-[10px]">
        <Ic w={34} h={27}>
          <path d="M7 19 5 3l12 6 14-4-8 17-12-4q-6-1-6 2t3 4q3-2 0-6" stroke="#111" strokeWidth="4" strokeLinejoin="round" />
          <path d="M7 19 5 3l12 6 14-4-8 17-12-4q-6-1-6 2t3 4q3-2 0-6" stroke="#fff" strokeWidth="1.500" />
        </Ic>
      </button>
      <Sep className="ml-[19px] h-8" />
      <p className="ml-[10px] text-[15px] leading-5 text-[#2b2b2b]">Selection Tool: Rectangular Marquee Mode</p>
      <div className="ml-auto flex items-center pt-[6px]">
        <div className="flex items-center gap-[9px]">
          {modeButtons.map((b) => (
            <button key={b.name} aria-label={b.name} className={`flex h-10 w-[50px] items-center justify-center ${b.on ? "border-2 border-[#a8a8a8] bg-linear-to-b from-[#bfbfbf] to-[#d2d2d2]" : ""}`}>
              {b.art}
            </button>
          ))}
        </div>
        <div className="ml-[11px] flex items-center gap-[20px]">
          {menuButtons.map((b) => (
            <button key={b.name} aria-label={b.name} className="flex w-[51px] items-center justify-between">
              {b.art}<SmallChevron />
            </button>
          ))}
        </div>
        <button aria-label="Mode bar menu" className="ml-[25px]">
          <Ic w={19} h={12}><path d="M1.500 1h16l-8 10z" fill="#fff" stroke="#1a1a1a" strokeWidth="1.500" /></Ic>
        </button>
      </div>
    </div>
  );
}

/* ---------- the model ---------- */

type Pt = [number, number];
const frame = (ox: number, oy: number, sx: number) => (...p: Pt[]) => p.map(([x, y]) => `${(ox + x * sx).toFixed(1)},${(oy + y * 0.41454).toFixed(1)}`).join(" ");
/* W plots points around the west end of the building, E around the east end */
const W = frame(1500, 1250, 0.8291);
const E = frame(2700, 1050, 1.14796);

const columns = Array.from({ length: 10 }, (_, i) => ({ x: 1650 + 269.4 * i, y: 1296 - 60.2 * i }));
const planters: Pt[] = [[2319, 1786], [2548, 1735], [2637, 1715], [2727, 1695], [2816, 1675], [3399, 1544], [3490, 1525], [3580, 1505], [3828, 1449], [3920, 1429], [4010, 1409], [4098, 1390]];
const bollards: Pt[] = [[2293, 1756], [2435, 1724], [2536, 1702], [2927, 1614], [3714, 1439], [3785, 1423], [4259, 1317]];

function Model() {
  return (
    <svg viewBox="484 312 4578 2546" className="h-full w-full" role="img" aria-label="Orthogonal view of the building model">
      <defs>
        <linearGradient id="post"><stop offset="0" stopColor="#b39445" /><stop offset=".25" stopColor="#edcf76" /><stop offset=".6" stopColor="#dfbd62" /><stop offset="1" stopColor="#6f5c28" /></linearGradient>
        <clipPath id="siding">
          <polygon points={`${W([970, 985])} ${E([1361, 412], [1361, 604], [975, 838], [972, 762], [861, 828], [861, 914], [622, 1056], [619, 980])} ${W([970, 1092])}`} />
        </clipPath>
      </defs>
      <path d="M4930 312V2858" stroke="#d6dbd5" strokeWidth="2.500" />

      {/* paving */}
      <polygon points={W([24, 1375], [98, 1337], [235, 1376], [571, 1226], [583, 1287], [235, 1441])} fill="#e3e3e3" />
      <polygon points={W([24, 1375], [235, 1441], [235, 1454], [24, 1388])} fill="#f0f0f0" />
      <polygon points={W([235, 1441], [583, 1286], [583, 1300], [235, 1454])} fill="#808080" />
      <polygon points={`${W([571, 1226], [957, 1300])} ${E([1300, 648], [1515, 741])} ${W([970, 1408], [583, 1287])}`} fill="#e1e1e1" />
      <polygon points={W([583, 1285], [970, 1407], [970, 1421], [583, 1300])} fill="#f1f1f1" />
      <polygon points={`${W([970, 1407])} ${E([1515, 741], [1515, 754])} ${W([970, 1421])}`} fill="#808080" />

      {/* row of tall columns */}
      {columns.map(({ x, y }, i) => {
        const bottom = i === 0 ? 1815 : i === 1 ? 1606 : y + 480;
        return (
          <g key={i}>
            <path d={`M${x} ${y}H${x + 7}V${bottom}H${x}z`} fill="#5f5f5f" />
            <path d={`M${x + 6} ${y + 1}L${x + 45} ${y + 7}V${bottom + 5}L${x + 6} ${bottom}z`} fill="#ababab" />
            <path d={`M${x + 45} ${y + 7}L${x + 55} ${y + 4}V${bottom}H${x + 45}z`} fill="#5b5b5b" />
            <path d={`M${x} ${y}L${x + 8} ${y - 3}L${x + 55} ${y + 4}L${x + 45} ${y + 7}L${x + 6} ${y + 1}z`} fill="#a0a0a0" />
          </g>
        );
      })}

      {/* far east wall */}
      <polygon points={E([1110, 236], [1250, 150], [1254, 150], [1254, 292], [1118, 240])} fill="#9c9c9c" />
      <polygon points={E([1118, 236], [1254, 154], [1254, 292])} fill="#5b5b5b" />

      {/* west walls */}
      <polygon points={W([235, 979], [510, 855], [540, 846], [540, 870], [235, 990])} fill="#9c9c9c" />
      <polygon points={W([235, 984], [520, 858], [535, 851], [830, 935], [830, 1055], [571, 976], [571, 1226], [235, 1375])} fill="#5b5b5b" />
      <polygon points={W([815, 930], [958, 975], [958, 1094], [815, 1052])} fill="#efefef" />
      <polygon points={W([825, 930], [902, 960], [902, 1076], [825, 1053])} fill="#a3dcee" />
      <polygon points={W([919, 968], [950, 978], [950, 1020], [919, 1011])} fill="#a3dcee" />
      <polygon points={W([919, 1032], [950, 1042], [950, 1093], [919, 1083])} fill="#a3dcee" />
      <polygon points={W([950, 975], [959, 978], [959, 1094], [950, 1092])} fill="#777" />
      <polygon points={W([959, 980], [971, 984], [971, 1090], [959, 1094])} fill="#ededed" />
      <polygon points={W([571, 976], [956, 1096], [956, 1347], [571, 1226])} fill="#adadad" />
      <polyline points={W([571, 977], [956, 1097])} stroke="#999" strokeWidth="3" fill="none" />

      {/* long street wall */}
      <polygon points={`${W([957, 1094], [972, 1080])} ${E([619, 960], [1293, 620], [1293, 812])} ${W([957, 1347])}`} fill="#5b5b5b" />

      {/* corner entrance */}
      <polygon points={W([1080, 1170], [1290, 1150], [1290, 1212], [1080, 1300])} fill="#e1e1e1" />
      <polygon points={W([1078, 1040], [1205, 985], [1205, 1237], [1196, 1237], [1078, 1200])} fill="#efefef" />
      <polygon points={W([1082, 1040], [1102, 1032], [1102, 1194], [1082, 1188])} fill="#a3dcee" />
      <polygon points={W([1107, 1030], [1194, 993], [1194, 1222], [1107, 1197])} fill="#a3dcee" />
      <polygon points={W([1200, 985], [1288, 950], [1288, 1200], [1200, 1237])} fill="#9a9a9a" />
      <polygon points={W([1205, 983], [1282, 950], [1282, 1184], [1205, 1222])} fill="#58767f" />
      <path d={`M${W([1285, 950])}L${W([1285, 1165])}`} stroke="#dedede" strokeWidth="2.500" />

      {/* side door */}
      <polygon points={E([177, 1240], [209, 1225], [209, 1481], [177, 1493])} fill="#808080" />
      <polygon points={E([180, 1240], [203, 1228], [203, 1347], [180, 1359])} fill="#58767f" />
      <polygon points={E([180, 1381], [203, 1369], [203, 1458], [180, 1470])} fill="#58767f" />
      <path d={`M${E([206, 1230])}L${E([206, 1370])}`} stroke="#cfcfcf" strokeWidth="2.500" />

      {/* ribbon windows and main doors */}
      <polygon points={E([648, 1030], [820, 930], [820, 965], [648, 1067])} fill="#b8bcbd" />
      <polygon points={E([650, 1030], [816, 930], [816, 960], [650, 1060])} fill="#58767f" />
      <polygon points={E([938, 780], [975, 760], [975, 830], [1288, 640], [1288, 675], [938, 886])} fill="#b0b4b5" />
      <polygon points={E([941, 780], [972, 760], [972, 828], [1282, 640], [1282, 671], [941, 878])} fill="#58767f" />
      <path d={[703, 760].map((x) => `M${E([x, 1000 - (x - 703) * 0.59])}L${E([x, 1031 - (x - 703) * 0.59])}`).join("")} stroke="#e6e6e6" strokeWidth="2.500" />
      <path d={[995, 1053, 1113, 1170, 1226].map((x) => `M${E([x, 815 - (x - 995) * 0.6])}L${E([x, 849 - (x - 995) * 0.6])}`).join("")} stroke="#e6e6e6" strokeWidth="2.500" />
      <polygon points={E([820, 930], [861, 905], [861, 820], [940, 780], [940, 1028], [850, 1083], [850, 1066], [820, 1062])} fill="#868686" />
      <g fill="#58767f">
        <polygon points={E([823, 930], [846, 917], [846, 1062], [823, 1058])} />
        <polygon points={E([862, 824], [875, 817], [875, 934], [853, 944], [853, 916], [862, 910])} />
        <polygon points={E([882, 814], [907, 800], [907, 912], [882, 926])} />
        <polygon points={E([853, 961], [875, 949], [875, 1045], [853, 1058])} />
        <polygon points={E([882, 945], [907, 933], [907, 1027], [882, 1040])} />
        <polygon points={E([911, 798], [935, 785], [935, 1022], [911, 1036])} />
      </g>
      <path d={[848, 877, 908, 937].map((x) => `M${E([x, x === 848 ? 918 : 800])}L${E([x, 1058 - (x - 848) * 0.35])}`).join("")} stroke="#d4d4d4" strokeWidth="2" />
      <path d={`M${E([1299, 640])}L${E([1301, 728])}M${E([1310, 636])}L${E([1313, 724])}M${E([1297, 660])}L${E([1312, 660])}`} stroke="#cfcfcf" strokeWidth="2" />

      {/* siding */}
      <polygon points={E([1361, 535], [1378, 540], [1378, 548], [1361, 559])} fill="#8c8c8c" />
      <g clipPath="url(#siding)">
        <rect x="2300" y="1190" width="1970" height="520" fill="#c4c4c4" />
        {Array.from({ length: 16 }, (_, k) => (
          <path key={k} d={`M2300 ${1661 + 5.95 * k}L4264 ${1222.5 + 5.95 * k}`} stroke="#7d7d7d" strokeWidth="1.700" />
        ))}
      </g>
      <path d={`M${W([970, 1092])}L${E([619, 980])}V1489M${E([861, 827])}L${E([971, 762])}V1397`} stroke="#777" strokeWidth="2.200" fill="none" />

      {/* fascias and roof */}
      <polygon points={W([512, 798], [968, 940], [968, 984], [518, 847])} fill="#a2a2a2" />
      <polyline points={W([518, 844], [966, 981])} stroke="#8b8b8b" strokeWidth="1.500" fill="none" />
      <polygon points={`${W([968, 940])} ${E([1376, 356], [1372, 403])} ${W([968, 983])}`} fill="#5b5b5b" />
      <path d={`M${W([970, 984])}L${E([1378, 402])}`} stroke="#9a9a9a" strokeWidth="2.500" />
      <polygon points={W([510, 794], [896, 457], [968, 940], [512, 798])} fill="#e2dfd9" />
      <polygon points={`${W([896, 457])} ${E([780, 211], [1386, 349])} ${W([968, 940])}`} fill="#d5d2cb" />
      <polygon points={E([780, 211], [1058, 205], [1386, 349])} fill="#c6c5c0" />
      <path d={`M${W([968, 940])}L${E([1386, 351])}`} stroke="#85837e" strokeWidth="2" />

      {/* lockers */}
      {[0, 1, 2].map((i) => {
        const x = 48 * i;
        const y = -29 * i;
        return (
          <g key={i}>
            <polygon points={E([300 + x, 1211 + y], [330 + x, 1222 + y], [330 + x, 1446 + y], [300 + x, 1435 + y])} fill="#d9d9d9" />
            <polygon points={E([330 + x, 1222 + y], [362 + x, 1205 + y], [362 + x, 1422 + y], [330 + x, 1438 + y])} fill="#767676" />
            <polygon points={E([300 + x, 1211 + y], [332 + x, 1192 + y], [362 + x, 1205 + y], [330 + x, 1222 + y])} fill="#cbcbcb" />
            <path d={`M${E([334 + x, 1436 + y])}V${1050 + 0.41454 * (1450 + y)}M${E([357 + x, 1422 + y])}V${1050 + 0.41454 * (1436 + y)}`} stroke="#666" strokeWidth="2" />
          </g>
        );
      }).reverse()}

      {/* planters */}
      {planters.map(([x, y]) => (
        <g key={x}>
          <path d={`M${x} ${y}l22 3.500v28l-22 -3.500z`} fill="#b4b2a8" />
          <path d={`M${x + 21.500} ${y + 3}l75.500 -16v29l-75.500 15.500z`} fill="#62615c" />
          <path d={`M${x} ${y}l76 -16.500l21 3.500l-75.500 16.500z`} fill="#ccc0b0" />
          <path d={`M${x} ${y}l76 -16.500`} stroke="#7c766c" strokeWidth="1.500" strokeDasharray="3 3" />
        </g>
      ))}

      {/* bollards */}
      {bollards.map(([x, y]) => (
        <g key={x}>
          <rect x={x} y={y} width="13" height="70" rx="2" fill="url(#post)" />
          <rect x={x} y={y} width="13" height="3" rx="1.500" fill="#e8c257" />
        </g>
      ))}
      <rect x="2994" y="1606" width="13" height="64" fill="url(#post)" />
      {[1593, 1675].map((y) => (
        <g key={y} stroke="#0a0f1e" strokeWidth="1.600" fill="#6cb2f7">
          <rect x="2984" y={y} width="32" height="15" />
          <rect x="2993" y={y - 2} width="8" height="18" />
          <rect x="2999" y={y + 1} width="8" height="16" />
        </g>
      ))}
    </svg>
  );
}

/* ---------- status bar ---------- */

function Corner() {
  return <path d="M25 32h7V23z" fill="#fff" stroke="#111" strokeWidth="1.300" />;
}

const snaps: { name: string; state: "on" | "off" | "dim"; art: ReactNode }[] = [
  { name: "Snap to grid", state: "off", art: <><path d="M6 9h8M10 5v8M19 9h8M23 5v8M6 23h8M10 19v8M19 23h8M23 19v8" stroke="#111" strokeWidth="1.700" /><Corner /></> },
  { name: "Snap to object", state: "on", art: <><path d="M8 8h17v18H8z" stroke="#111" strokeWidth="1.700" /><path d="M5 7h4v3H5zM24 7h4v3h-4zM5 25h4v3H5zM24 25h3v3h-3z" fill="#111" /><Corner /></> },
  { name: "Snap to angle", state: "on", art: <><path d="M7 5v22h17M8 26 24 8M8 9q12 3 14 17M10 10l12 14" stroke="#111" strokeWidth="1.500" /><Corner /></> },
  { name: "Snap to intersection", state: "on", art: <><path d="M6 6l20 21M26 6 6 27" stroke="#fff" strokeWidth="3.500" /><path d="M6 6l20 21M26 6 6 27" stroke="#111" strokeWidth="1.500" /><path d="M14 14h5v5h-5z" fill="#111" /></> },
  { name: "Smart points", state: "on", art: <><path d="M5 6h6v6H5z" fill="#fff" stroke="#111" strokeWidth="2" /><path d="M13 9h16" stroke="#111" strokeWidth="2" strokeDasharray="2.500 2.500" /><path d="M8 14v14" stroke="#111" strokeWidth="2" strokeDasharray="3 3" /><Corner /></> },
  { name: "Smart edge", state: "off", art: <><path d="M26 6 17 17M11 24l-5 4" stroke="#111" strokeWidth="2" /><path d="M12 18h4v4h-4z" fill="#111" /><Corner /></> },
  { name: "Snap to distance", state: "on", art: <><path d="M24 4 12 20M5 25l8-8 7 6-4 3-9-8" stroke="#111" strokeWidth="1.600" /><Corner /></> },
  { name: "Snap to tangent", state: "dim", art: <path d="M3 12q6-6 11 0t5 16M10 5l18 20" stroke="#a9aba9" strokeWidth="1.700" /> },
  { name: "Snap to working plane", state: "off", art: <path d="M16 5 28 16 16 27 4 16zM10 10.500l12 11M22 10.500l-12 11" stroke="#111" strokeWidth="1.700" /> },
  { name: "Suspend snapping", state: "off", art: <path d="M10 9h4.500v16H10zM18 9h4.500v16H18z" fill="#000" /> },
  { name: "Snapping settings", state: "off", art: <><path d="M14.500 8h4l.6 2.600 2 .9 2.400-1.500 2.700 2.800-1.400 2.300.7 1.900h1v3h-1.500l-.8 1.800 1.200 2.300-2.500 2.400-2.300-1.200-1.800.7-.8 2h-3l-.8-2-1.800-.7-2.400 1.200-2.500-2.500 1.200-2.300-.7-1.700H7v-3h1.500l.7-2L8 12l2.500-2 2.400 1.500 1-.4z" fill="#000" /><circle cx="16.800" cy="18" r="3.800" fill="#f2f2f2" /></> },
];

function StatusBar() {
  return (
    <footer className="flex h-[38px] shrink-0 items-center bg-[#ebedec] pl-[9px] pr-[23px] text-[18px] leading-6 text-[#2b2b2b]">
      <span className="grow">For Help, press F1 or click the ? icon</span>
      <span className="w-[168px]">X: -74320</span>
      <span className="w-[168px]">Y: -95000</span>
      <span className="w-[164px]">Z: 0</span>
      <div className="flex gap-[3px]">
        {snaps.map((s) => (
          <button key={s.name} aria-label={s.name} disabled={s.state === "dim"} className={`flex size-[35px] items-center justify-center border-2 ${s.state === "on" ? "border-[#a6a6a6] bg-linear-to-b from-[#bdbdbd] to-[#d0d0d0]" : s.state === "off" ? "border-[#a6a6a6] bg-[#f2f2f2]" : "border-[#cdcfce] bg-[#eff1f0]"}`}>
            <svg width="31" height="31" viewBox="1 1 33 33" fill="none" aria-hidden="true">{s.art}</svg>
          </button>
        ))}
      </div>
    </footer>
  );
}

/* ---------- window ---------- */

export default function App() {
  return (
    <div className="flex h-screen w-full bg-white px-[89px] pb-[117px] pt-[60px] font-['Inter','Liberation_Sans',sans-serif]">
      <main className="flex min-w-0 grow flex-col overflow-hidden rounded-[17px] bg-[#ebedec] shadow-[0_0_0_1px_rgba(0,0,0,0.28),0_32px_60px_rgba(0,0,0,0.4)]">
        <TitleBar />
        <div className="flex min-h-0 grow">
          <aside className="flex w-[285px] shrink-0 flex-col">
            <ToolSets />
            <div className="grid h-[9px] shrink-0"><Grip /></div>
            <Attributes />
            <div className="grid h-[9px] shrink-0"><Grip /></div>
            <ObjectInfo />
          </aside>
          <div className="flex w-[9px] shrink-0 flex-col items-center justify-center gap-[5px] bg-[#b5b5b5]">
            <i className="size-[3px] bg-[#6a6a6a]" />
            <i className="size-[3px] bg-[#6a6a6a]" />
            <i className="size-[3px] bg-[#6a6a6a]" />
          </div>
          <div className="flex min-w-0 grow flex-col">
            <div className="flex h-[45px] shrink-0 items-end bg-linear-to-b from-[#cacaca] to-[#b6b6b6] pl-[6px]">
              <div className="flex h-[39px] w-[369px] items-center gap-[6px] rounded-t-[6px] bg-[#e9e9e9] pl-[21px] pt-px shadow-[0_-1px_3px_rgba(0,0,0,0.5)]">
                <button aria-label="Close Viewer trial 2.vwx"><CloseX size={16} /></button>
                <span className="text-[21px] leading-7 text-[#262626]">Viewer trial 2.vwx</span>
              </div>
            </div>
            <div className="z-10 flex flex-col bg-[#ebedec]">
              <ViewBar />
              <ModeBar />
            </div>
            <div className="min-h-0 grow bg-[#edf5ec]"><Model /></div>
          </div>
        </div>
        <StatusBar />
      </main>
    </div>
  );
}
